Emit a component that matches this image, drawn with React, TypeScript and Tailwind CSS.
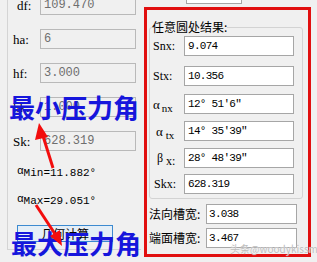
import React from "react";

const mono = { fontFamily: '"Liberation Mono", "DejaVu Sans Mono", monospace' };
const serif = { fontFamily: '"Liberation Serif", "Noto Sans CJK SC", serif' };
const cjk = { fontFamily: '"Noto Sans CJK SC", "Noto Sans", sans-serif' };

function LeftRow({ label, value, className = "" }: { label: string; value: string; className?: string }) {
  return (
    <div className={`flex items-center h-[20px] ${className}`}>
      <span className="w-[27px] text-[13px] text-black leading-none" style={serif}>
        {label}
      </span>
      <div
        className="w-[96px] h-[20px] border border-[#b9b9b9] bg-[#f0f0f0] flex items-center pl-[3px] text-[12px] text-[#6e6e6e] leading-none"
        style={mono}
      >
        {value}
      </div>
    </div>
  );
}

function RightRow({ label, value, className = "" }: { label: React.ReactNode; value: string; className?: string }) {
  return (
    <div className={`flex items-center h-[20px] ${className}`}>
      <div className="w-[34px] pl-[3px] text-[12px] text-black leading-none" style={serif}>
        {label}
      </div>
      <div
        className="w-[110px] h-[20px] border border-[#a6a6a6] bg-white flex items-center pl-[3px] text-[11px] tracking-[-0.7px] text-black leading-none"
        style={mono}
      >
        {value}
      </div>
    </div>
  );
}

function CjkRow({ label, value, className = "" }: { label: string; value: string; className?: string }) {
  return (
    <div className={`flex items-center h-[20px] ${className}`}>
      <div className="w-[57px] text-[12px] text-black leading-none" style={cjk}>
        {label}
      </div>
      <div
        className="w-[91px] h-[20px] border border-[#a6a6a6] bg-white flex items-center pl-[2px] text-[11px] tracking-[-0.7px] text-black leading-none"
        style={mono}
      >
        {value}
      </div>
    </div>
  );
}

function Arrows() {
  return (
    <svg className="absolute left-0 top-0 pointer-events-none" width="317" height="262">
      <line x1="53" y1="168" x2="43" y2="136" stroke="#f20d0d" strokeWidth="3" />
      <polygon points="39,123 35,140 48,137" fill="#f20d0d" />
      <line x1="36" y1="205" x2="55" y2="234" stroke="#f20d0d" strokeWidth="3" />
      <polygon points="62,246 50,236 60,230" fill="#f20d0d" />
    </svg>
  );
}

export default function App() {
  return (
    <div className="relative w-[317px] h-[262px] overflow-hidden bg-[#f0f0f0] flex">
      {/* left group */}
      <div className="ml-[7px] w-[134px] h-[250px] border-l border-b border-[#d4d4d4] pl-[5px] flex flex-col">
        <LeftRow label="df:" value="109.470" className="mt-[-5px] [&>span]:pl-[4px]" />
        <LeftRow label="ha:" value="6" className="mt-[14px]" />
        <LeftRow label="hf:" value="3.000" className="mt-[14px]" />
        <LeftRow label="hk:" value="1.000" className="mt-[14px]" />
        <LeftRow label="Sk:" value="628.319" className="mt-[14px]" />
        <div className="mt-[16px] h-[12px] flex items-end pl-[4px] text-[11px] leading-none text-black" style={mono}>
          <span className="relative top-[-2px]">α</span>
          <span>Min=11.882°</span>
        </div>
        <div className="mt-[16px] h-[12px] flex items-end pl-[4px] text-[11px] leading-none text-black" style={mono}>
          <span className="relative top-[-2px]">α</span>
          <span>Max=29.051°</span>
        </div>
        <button
          className="mt-[18px] ml-[4px] w-[96px] h-[17px] border border-[#3c8ad0] bg-[#e4eef7] flex items-center justify-center text-[12px] leading-none text-black"
          style={cjk}
        >
          几何计算
        </button>
      </div>

      {/* right */}
      <div className="ml-[3px] flex flex-col">
        <div className="ml-[42px] mt-[-16px] w-[56px] h-[20px] border border-[#a6a6a6] bg-white" />
        <div className="mt-[3px] w-[167px] h-[250px] border-[3px] border-[#e10f0f] flex flex-col">
          <fieldset className="mt-[10px] ml-[2px] w-[154px] border border-[#d3d3d3] rounded-[3px] pb-[4px]">
            <legend className="ml-[2px] text-[12px] leading-[14px] text-black" style={cjk}>
              任意圆处结果:
            </legend>
            <RightRow label="Snx:" value="9.074" className="mt-[2px]" />
            <RightRow label="Stx:" value="10.356" className="mt-[10px]" />
            <RightRow
              label={
                <span className="text-[13px]">
                  α<span className="text-[11px] relative top-[3px] ml-[2px]">nx</span>
                </span>
              }
              value="12° 51′6″"
              className="mt-[8px]"
            />
            <RightRow
              label={
                <span className="text-[13px] pl-[3px]">
                  α<span className="text-[11px] relative top-[3px] ml-[3px]">tx</span>
                </span>
              }
              value="14° 35′39″"
              className="mt-[7px]"
            />
            <RightRow
              label={
                <span className="text-[12px] pl-[4px]">
                  β<span className="text-[12px] relative top-[3px] ml-[3px]">x:</span>
                </span>
              }
              value="28° 48′39″"
              className="mt-[7px]"
            />
            <RightRow label="Skx:" value="628.319" className="mt-[6px] [&>div:first-child]:pl-[4px]" />
          </fieldset>
          <CjkRow label="法向槽宽:" value="3.038" className="mt-[5px] ml-[2px]" />
          <CjkRow label="端面槽宽:" value="3.467" className="mt-[4px] ml-[2px]" />
        </div>
      </div>

      {/* annotations */}
      <div
        className="absolute left-[9px] top-[94px] text-[26px] leading-none font-bold text-[#1616dc] whitespace-nowrap"
        style={cjk}
      >
        最小压力角
      </div>
      <div
        className="absolute left-[11px] top-[230px] text-[26px] leading-none font-bold text-[#1616dc] whitespace-nowrap"
        style={cjk}
      >
        最大压力角
      </div>
      <Arrows />
      <div
        className="absolute left-[230px] top-[244px] text-[10px] leading-none text-[#bdbdbd] whitespace-nowrap [text-shadow:0_0_1px_#ffffff]"
        style={cjk}
      >
        头条@woodykissme
      </div>
    </div>
  );
}
